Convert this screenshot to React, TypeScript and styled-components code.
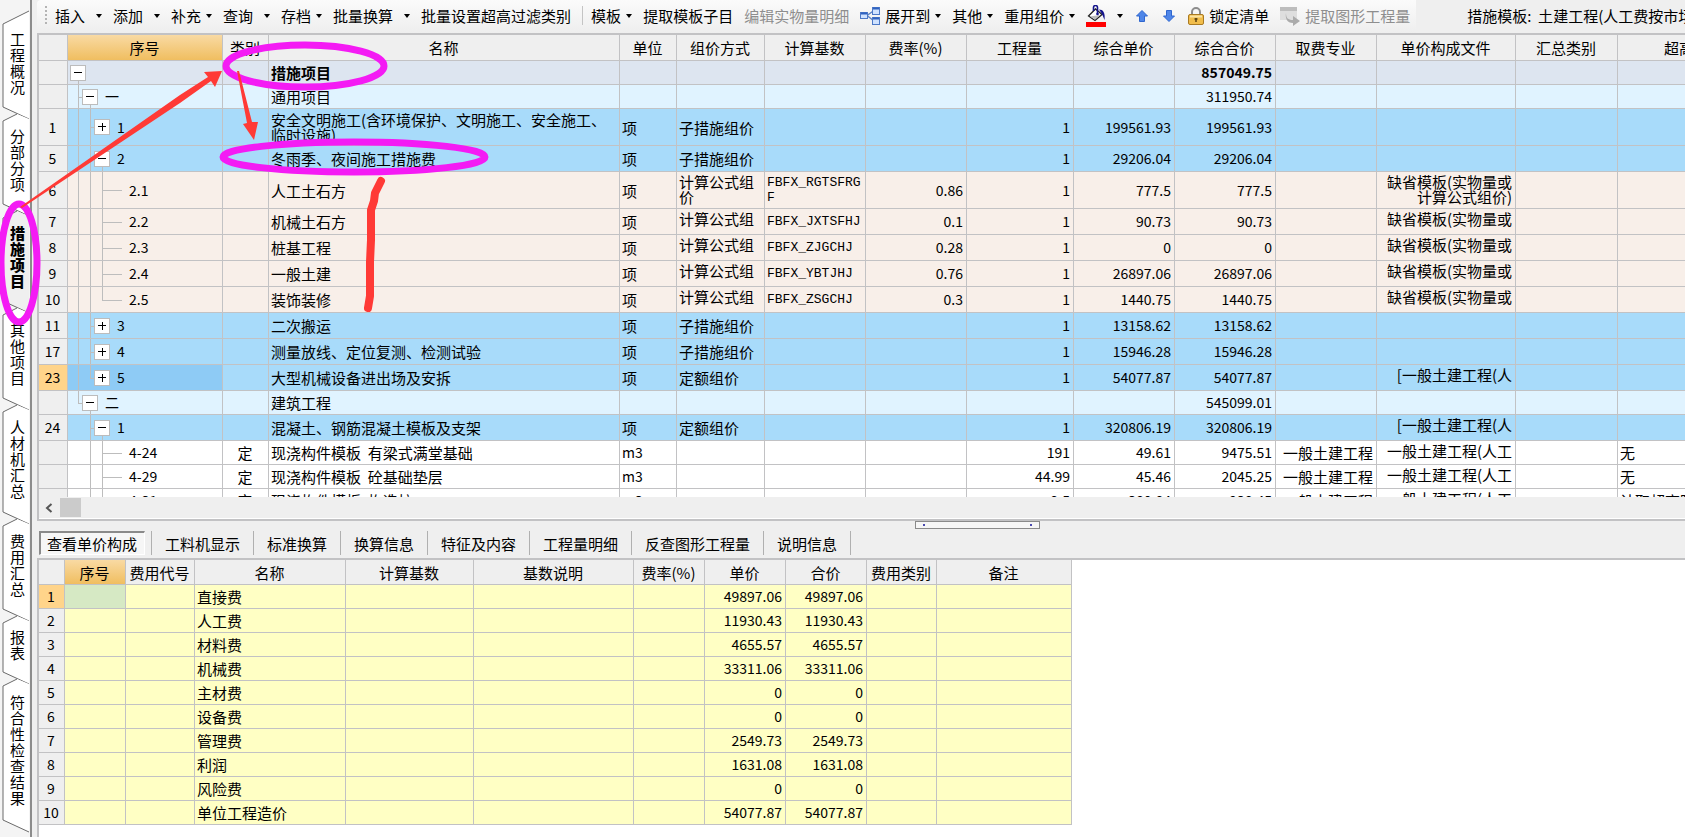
import React from 'react';
import styled, { createGlobalStyle, css } from 'styled-components';

const GlobalStyle = createGlobalStyle`
  *, *::before, *::after { box-sizing: border-box; }
  html, body { margin: 0; background: #efefef; }
  body, button {
    font-family: "Noto Sans CJK SC", "Liberation Sans", sans-serif;
    font-size: 15px;
    line-height: 15px;
    color: #000;
  }
  button { border: 0; padding: 0; background: none; white-space: nowrap; }
`;

const line = '#c2c2c4';

const Page = styled.div`
  position: relative;
  display: flex;
  height: 100vh;
  overflow: hidden;
`;

/* ---------- side tabs ---------- */

const SideBar = styled.nav`
  flex: none;
  display: flex;
  flex-direction: column;
  width: 32px;
  padding-top: 17px;
  background: #f4f4f4;
  border-right: 2px solid #8c8c8c;
  overflow: hidden;
`;

const SideTab = styled.button<{ $active?: boolean }>`
  position: relative;
  flex: none;
  width: 100%;
  padding: 0 6px 6px 10px;
  white-space: normal;
  word-break: break-all;
  line-height: 16px;
  font-weight: ${p => (p.$active ? 900 : 400)};
`;

const TabShape = styled.svg`
  position: absolute;
  left: 0;
  top: 0;
  width: 30px;
  overflow: visible;
`;

const TabText = styled.span`
  position: relative;
  display: block;
  width: 15px;
  overflow-wrap: anywhere;
`;

const sideTabs = ['工程概况', '分部分项', '措施项目', '其他项目', '人材机汇总', '费用汇总', '报表', '符合性检查结果'];

function SideTabs() {
  return (
    <SideBar>
      {sideTabs.map((name, i) => {
        const h = name.length * 17 + 29;
        const active = name === '措施项目';
        const top = i === 0 ? 'M29 -6 L3 7' : 'M17 0 L3 7';
        return (
          <SideTab key={name} $active={active} style={{ height: h }}>
            <TabShape height={h}>
              <path d={`${top} V${h - 7} L29 ${h + 5} V${i === 0 ? -6 : 5} Z`} fill={active ? '#efefef' : '#fff'} />
              <path d={`${top} V${h - 7} L29 ${h + 5}`} fill="none" stroke="#6a6a6a" />
            </TabShape>
            <TabText>{name}</TabText>
          </SideTab>
        );
      })}
    </SideBar>
  );
}

/* ---------- toolbar ---------- */

const Main = styled.main`
  flex: 1;
  min-width: 0;
  display: flex;
  flex-direction: column;
  padding-left: 5px;
`;

const TopBar = styled.header`
  flex: none;
  display: flex;
  align-items: center;
  height: 33px;
  overflow: hidden;
`;

const Tools = styled.div`
  flex: none;
  display: flex;
  align-items: center;
  gap: 11px;
  height: 100%;
  padding: 0 6px 2px 8px;
  background: linear-gradient(#fbfbfb, #eeeeee);
  border-radius: 4px 0 0 0;
`;

const Grip = styled.span`
  width: 2px;
  height: 19px;
  margin-right: -3px;
  background: repeating-linear-gradient(#b4b4b4 0 2px, transparent 2px 4px);
`;

const Tool = styled.button<{ $wide?: boolean; $gray?: boolean }>`
  flex: none;
  display: flex;
  align-items: center;
  gap: ${p => (p.$wide ? 11 : 5)}px;
  height: 24px;
  color: ${p => (p.$gray ? '#8e8e8e' : '#000')};
`;

const IconTool = styled(Tool)`
  padding: 0 2px;
`;

const Caret = styled.i`
  border: 3px solid transparent;
  border-top: 4px solid #000;
  border-bottom: 0;
`;

const Separator = styled.span`
  width: 1px;
  height: 19px;
  margin-right: -3px;
  background: #c4c4c4;
`;

const TemplateInfo = styled.span`
  flex: none;
  padding: 0 0 2px 51px;
  white-space: pre;
`;

const TreeIcon = () => (
  <svg width="20" height="20" viewBox="0 0 20 20">
    <path d="M7 9.500 L14 4.500 M7 9.500 L14 15" fill="none" stroke="#5b82c4" strokeWidth="1.500" />
    <rect x="0.500" y="6.500" width="7" height="6" fill="#cfe2ff" stroke="#4d79c7" />
    <rect x="12.500" y="1.500" width="7" height="7" fill="#cfe2ff" stroke="#4d79c7" />
    <rect x="12.500" y="11.500" width="7" height="7" fill="#cfe2ff" stroke="#4d79c7" />
    <path d="M1 7.500h6M13 2.500h6M13 12.500h6" stroke="#2f62c0" strokeWidth="2" />
  </svg>
);

const BucketIcon = () => (
  <svg width="20" height="22" viewBox="0 0 20 22">
    <path d="M2.500 11 L9.500 4 L16 9.500 L9 15.500 Z" fill="#fff" stroke="#222" strokeWidth="1.300" />
    <path d="M4 11.500 L14 10 L9 14.500 Z" fill="#bbb" />
    <path d="M7.500 6V2.500a2 2 0 0 1 4 0V9" fill="none" stroke="#14148c" strokeWidth="1.600" />
    <circle cx="11.500" cy="9" r="1.300" fill="#14148c" />
    <path d="M13 4.500c4 0 6.500 3 5.500 10.500-1-2-1.500-5-5.500-10.500z" fill="#14148c" />
    <rect x="0" y="17" width="20" height="5" fill="#f00" />
  </svg>
);

const ArrowIcon = ({ down }: { down?: boolean }) => (
  <svg width="12" height="12" viewBox="0 0 12 12">
    <path
      d={down ? 'M3.500 .5h5v5.500h3L6 11.500.5 6h3z' : 'M3.500 11.500h5V6h3L6 .5.5 6h3z'}
      fill="#4f86e8"
      stroke="#2f66cf"
    />
  </svg>
);

const LockIcon = () => (
  <svg width="16" height="18" viewBox="0 0 16 18">
    <path d="M4 8V5a4 4 0 0 1 8 0v3" fill="none" stroke="#8d8d8d" strokeWidth="2" />
    <rect x="0.500" y="7.500" width="15" height="10" rx="1.500" fill="#f1bd4b" stroke="#a97a22" />
    <path d="M2 9.500h12" stroke="#fbe3a2" strokeWidth="2" />
    <path d="M8 11v4M6.500 12h3" stroke="#5c4210" strokeWidth="1.500" />
  </svg>
);

const ExtractIcon = () => (
  <svg width="20" height="20" viewBox="0 0 20 20">
    <rect x="0" y="1" width="17" height="13" fill="#dedede" />
    <rect x="0" y="1" width="17" height="4" fill="#bdbdbd" />
    <path d="M6 7c0 5 2 7 7 7v-4l7 5-7 5v-3C7 17 5 12 6 7z" fill="#ababab" />
  </svg>
);

function Toolbar() {
  return (
    <TopBar>
      <Tools role="toolbar">
        <Grip />
        <Tool $wide>插入<Caret /></Tool>
        <Tool $wide>添加<Caret /></Tool>
        <Tool>补充<Caret /></Tool>
        <Tool $wide>查询<Caret /></Tool>
        <Tool>存档<Caret /></Tool>
        <Tool $wide>批量换算<Caret /></Tool>
        <Tool>批量设置超高过滤类别</Tool>
        <Separator />
        <Tool>模板<Caret /></Tool>
        <Tool>提取模板子目</Tool>
        <Tool $gray disabled>编辑实物量明细</Tool>
        <Tool><TreeIcon />展开到<Caret /></Tool>
        <Tool>其他<Caret /></Tool>
        <Tool>重用组价<Caret /></Tool>
        <Tool $wide aria-label="填充颜色"><BucketIcon /><Caret /></Tool>
        <IconTool aria-label="上移"><ArrowIcon /></IconTool>
        <IconTool aria-label="下移"><ArrowIcon down /></IconTool>
        <Tool><LockIcon />锁定清单</Tool>
        <Tool $gray disabled><ExtractIcon />提取图形工程量</Tool>
      </Tools>
      <TemplateInfo>措施模板:  土建工程(人工费按市场价)</TemplateInfo>
    </TopBar>
  );
}

/* ---------- grids ---------- */

const Frame = styled.section<{ $fill?: boolean; $white?: boolean }>`
  flex: ${p => (p.$fill ? '1 0 0' : 'none')};
  min-height: 0;
  overflow: hidden;
  border-top: 2px solid ${line};
  border-left: 2px solid ${line};
  background: ${p => (p.$white ? '#fff' : '#efefef')};
`;

const GridClip = styled.div`
  height: 462px;
  overflow: hidden;
  background: #fff;
`;

const Grid = styled.table`
  table-layout: fixed;
  width: 0;
  border-collapse: separate;
  border-spacing: 0;
`;

const cellBase = css`
  padding: 0 3px 0 2px;
  border-right: 1px solid ${line};
  border-bottom: 1px solid ${line};
  overflow: hidden;
  white-space: nowrap;
  font-weight: 400;
`;

const HeadCell = styled.th<{ $hot?: boolean; $h: number }>`
  ${cellBase}
  height: ${p => p.$h}px;
  background: ${p => (p.$hot ? 'linear-gradient(#f9daa3, #f0be60)' : '#efefef')};
`;

const IndexCell = styled.th<{ $hot?: boolean }>`
  ${cellBase}
  font-size: 14px;
  background: ${p => (p.$hot ? '#ffd48a' : '#efefef')};
`;

type Kind = 'root' | 'part' | 'item' | 'sub' | 'quota' | 'fee';
const rowColor: Record<Kind, string> = {
  root: '#dde5f0',
  part: '#e0f3ff',
  item: '#a8dbfa',
  sub: '#f8efe9',
  quota: '#ffffff',
  fee: '#ffffc4',
};

const Row = styled.tr<{ $kind: Kind; $h: number }>`
  height: ${p => p.$h}px;
  background: ${p => rowColor[p.$kind]};
`;

const Cell = styled.td<{
  $align?: 'left' | 'center' | 'right';
  $num?: boolean;
  $bold?: boolean;
  $top?: boolean;
  $bg?: string;
}>`
  ${cellBase}
  text-align: ${p => p.$align || 'left'};
  font-size: ${p => (p.$num ? 14 : 15)}px;
  font-weight: ${p => (p.$bold ? 700 : 400)};
  ${p => p.$top && 'vertical-align: top; padding-top: 2px;'}
  ${p => p.$bg && `background: ${p.$bg};`}
`;

const CodeCell = styled(Cell)`
  font-family: "Liberation Mono", monospace;
  font-size: 13px;
`;

const Tree = styled.div<{ $h: number }>`
  display: flex;
  align-items: center;
  height: ${p => p.$h}px;
  padding-left: 2px;
  font-size: 14px;
`;

type Guide = 'none' | 'line' | 'tee' | 'end';
const Unit = styled.span<{ $g?: Guide; $long?: boolean }>`
  position: relative;
  flex: none;
  align-self: stretch;
  width: 12px;
  ${p =>
    p.$g && p.$g !== 'none' &&
    css`
      &::before {
        content: '';
        position: absolute;
        left: 6px;
        top: 0;
        height: ${p.$g === 'end' ? '50%' : '100%'};
        border-left: 1px solid #bdbdbd;
      }
    `}
  ${p =>
    (p.$g === 'tee' || p.$g === 'end') &&
    css`
      &::after {
        content: '';
        position: absolute;
        left: 6px;
        top: 50%;
        width: ${p.$long ? 20 : 8}px;
        border-top: 1px solid #bdbdbd;
      }
    `}
`;

const ToggleUnit = styled.span<{ $open: boolean }>`
  position: relative;
  flex: none;
  display: flex;
  align-items: center;
  justify-content: center;
  align-self: stretch;
  width: 12px;
  &::before {
    content: '';
    position: absolute;
    left: 6px;
    top: 50%;
    bottom: 0;
    border-left: ${p => (p.$open ? 1 : 0)}px solid #bdbdbd;
  }
`;

const Toggle = styled.button<{ $open: boolean }>`
  position: relative;
  flex: none;
  width: 16px;
  height: 16px;
  background: #fff;
  border: 1px solid #bcbcbc;
  &::before, &::after {
    content: '';
    position: absolute;
    background: #000;
  }
  &::before { left: 3px; top: 6px; width: 8px; height: 1px; }
  &::after { left: 7px; top: 3px; width: ${p => (p.$open ? 0 : 1)}px; height: 8px; }
`;

const TreeLabel = styled.span<{ $leaf: boolean }>`
  margin-left: ${p => (p.$leaf ? 21 : 9)}px;
`;

interface Column { name: string; w: number; }

const topColumns: Column[] = [
  { name: '', w: 29 }, { name: '序号', w: 155 }, { name: '类别', w: 46 }, { name: '名称', w: 351 },
  { name: '单位', w: 57 }, { name: '组价方式', w: 88 }, { name: '计算基数', w: 101 }, { name: '费率(%)', w: 101 },
  { name: '工程量', w: 107 }, { name: '综合单价', w: 101 }, { name: '综合合价', w: 101 }, { name: '取费专业', w: 101 },
  { name: '单价构成文件', w: 139 }, { name: '汇总类别', w: 102 }, { name: '超高过滤类别', w: 184 },
];

interface Item {
  kind: Kind;
  no?: string;
  guides: Guide[];
  open?: boolean;
  label?: string;
  type?: string;
  name: string;
  unit?: string;
  method?: string;
  base?: string;
  rate?: string;
  qty?: string;
  price?: string;
  total?: string;
  trade?: string;
  file?: string;
  high?: string;
  tall?: boolean;
  hot?: boolean;
}

const items: Item[] = [
  { kind: 'root', guides: [], open: true, name: '措施项目', total: '857049.75' },
  { kind: 'part', guides: ['tee'], open: true, label: '一', name: '通用项目', total: '311950.74' },
  { kind: 'item', no: '1', guides: ['line', 'tee'], open: false, label: '1', tall: true, name: '安全文明施工(含环境保护、文明施工、安全施工、\n临时设施)', unit: '项', method: '子措施组价', qty: '1', price: '199561.93', total: '199561.93' },
  { kind: 'item', no: '5', guides: ['line', 'tee'], open: true, label: '2', name: '冬雨季、夜间施工措施费', unit: '项', method: '子措施组价', qty: '1', price: '29206.04', total: '29206.04' },
  { kind: 'sub', no: '6', guides: ['line', 'line', 'tee'], label: '2.1', tall: true, name: '人工土石方', unit: '项', method: '计算公式组\n价', base: 'FBFX_RGTSFRG\nF', rate: '0.86', qty: '1', price: '777.5', total: '777.5', file: '缺省模板(实物量或\n计算公式组价)' },
  { kind: 'sub', no: '7', guides: ['line', 'line', 'tee'], label: '2.2', name: '机械土石方', unit: '项', method: '计算公式组', base: 'FBFX_JXTSFHJ', rate: '0.1', qty: '1', price: '90.73', total: '90.73', file: '缺省模板(实物量或' },
  { kind: 'sub', no: '8', guides: ['line', 'line', 'tee'], label: '2.3', name: '桩基工程', unit: '项', method: '计算公式组', base: 'FBFX_ZJGCHJ', rate: '0.28', qty: '1', price: '0', total: '0', file: '缺省模板(实物量或' },
  { kind: 'sub', no: '9', guides: ['line', 'line', 'tee'], label: '2.4', name: '一般土建', unit: '项', method: '计算公式组', base: 'FBFX_YBTJHJ', rate: '0.76', qty: '1', price: '26897.06', total: '26897.06', file: '缺省模板(实物量或' },
  { kind: 'sub', no: '10', guides: ['line', 'line', 'end'], label: '2.5', name: '装饰装修', unit: '项', method: '计算公式组', base: 'FBFX_ZSGCHJ', rate: '0.3', qty: '1', price: '1440.75', total: '1440.75', file: '缺省模板(实物量或' },
  { kind: 'item', no: '11', guides: ['line', 'tee'], open: false, label: '3', name: '二次搬运', unit: '项', method: '子措施组价', qty: '1', price: '13158.62', total: '13158.62' },
  { kind: 'item', no: '17', guides: ['line', 'tee'], open: false, label: '4', name: '测量放线、定位复测、检测试验', unit: '项', method: '子措施组价', qty: '1', price: '15946.28', total: '15946.28' },
  { kind: 'item', no: '23', hot: true, guides: ['line', 'end'], open: false, label: '5', name: '大型机械设备进出场及安拆', unit: '项', method: '定额组价', qty: '1', price: '54077.87', total: '54077.87', file: '[一般土建工程(人' },
  { kind: 'part', guides: ['end'], open: true, label: '二', name: '建筑工程', total: '545099.01' },
  { kind: 'item', no: '24', guides: ['none', 'tee'], open: true, label: '1', name: '混凝土、钢筋混凝土模板及支架', unit: '项', method: '定额组价', qty: '1', price: '320806.19', total: '320806.19', file: '[一般土建工程(人' },
  { kind: 'quota', guides: ['none', 'line', 'tee'], label: '4-24', type: '定', name: '现浇构件模板  有梁式满堂基础', unit: 'm3', qty: '191', price: '49.61', total: '9475.51', trade: '一般土建工程', file: '一般土建工程(人工', high: '无' },
  { kind: 'quota', guides: ['none', 'line', 'tee'], label: '4-29', type: '定', name: '现浇构件模板  砼基础垫层', unit: 'm3', qty: '44.99', price: '45.46', total: '2045.25', trade: '一般土建工程', file: '一般土建工程(人工', high: '无' },
  { kind: 'quota', guides: ['none', 'line', 'tee'], label: '4-31', type: '定', name: '现浇构件模板  构造柱', unit: 'm3', qty: '2.5', price: '380.84', total: '938.45', trade: '一般土建工程', file: '一般土建工程(人工', high: '计取超高降效' },
];

const Lines = styled.span`
  white-space: pre;
`;

function rowHeight(it: Item) {
  if (it.tall) return 37;
  return it.kind === 'item' || it.kind === 'sub' ? 26 : 24;
}

function MeasureGrid() {
  return (
    <Grid>
      <colgroup>
        {topColumns.map((c, i) => <col key={i} style={{ width: c.w }} />)}
      </colgroup>
      <thead>
        <tr>
          {topColumns.map((c, i) => <HeadCell key={i} $h={26} $hot={i === 1}>{c.name}</HeadCell>)}
        </tr>
      </thead>
      <tbody>
        {items.map((it, i) => {
          const h = rowHeight(it);
          const leaf = it.open === undefined;
          const bold = it.kind === 'root';
          return (
            <Row key={i} $kind={it.kind} $h={h}>
              <IndexCell $hot={it.hot}>{it.no}</IndexCell>
              <Cell $bg={it.hot ? '#8ecbf5' : undefined}>
                <Tree $h={h - 1}>
                  {it.guides.map((g, k) => <Unit key={k} $g={g} $long={leaf} />)}
                  {!leaf && (
                    <ToggleUnit $open={!!it.open}>
                      <Toggle $open={!!it.open} aria-label={it.open ? '收起' : '展开'} />
                    </ToggleUnit>
                  )}
                  <TreeLabel $leaf={leaf}>{it.label}</TreeLabel>
                </Tree>
              </Cell>
              <Cell $align="center">{it.type}</Cell>
              <Cell $bold={bold}><Lines>{it.name}</Lines></Cell>
              <Cell $num={it.unit === 'm3'}>{it.unit}</Cell>
              <Cell $top={it.kind === 'sub'}><Lines>{it.method}</Lines></Cell>
              <CodeCell><Lines>{it.base}</Lines></CodeCell>
              <Cell $align="right" $num>{it.rate}</Cell>
              <Cell $align="right" $num>{it.qty}</Cell>
              <Cell $align="right" $num>{it.price}</Cell>
              <Cell $align="right" $num $bold={bold}>{it.total}</Cell>
              <Cell $align="right">{it.trade}</Cell>
              <Cell $align="right" $top={!!it.file}><Lines>{it.file}</Lines></Cell>
              <Cell />
              <Cell>{it.high}</Cell>
            </Row>
          );
        })}
      </tbody>
    </Grid>
  );
}

const ScrollBar = styled.div`
  display: flex;
  align-items: center;
  height: 22px;
  padding-left: 6px;
  gap: 7px;
  background: #efefef;
  border-bottom: 1px solid #fff;
`;

const ScrollButton = styled.button`
  display: flex;
  width: 8px;
`;

const Thumb = styled.div`
  width: 21px;
  height: 19px;
  background: #cbcbcb;
`;

const Splitter = styled.div`
  flex: none;
  display: flex;
  justify-content: center;
  height: 12px;
  padding-left: 232px;
  border-top: 2px solid ${line};
`;

const SplitHandle = styled.button`
  display: flex;
  align-items: center;
  justify-content: space-between;
  width: 125px;
  height: 8px;
  padding: 0 7px;
  background: #f6f6f6;
  border: 1px solid #8a8a8a;
  &::before, &::after {
    content: '';
    width: 2px;
    height: 2px;
    background: #4a4ab0;
  }
`;

const DetailTabs = styled.div`
  flex: none;
  display: flex;
  height: 24px;
  margin-bottom: 3px;
  padding: 0 2px;
`;

const DetailTab = styled.button<{ $active?: boolean }>`
  flex: none;
  padding: 0 13px;
  border-right: 1px solid #b0b0b0;
  ${p =>
    p.$active &&
    css`
      margin-right: 6px;
      padding: 0 7px 0 6px;
      background: #f6f6f6;
      border: 1px solid #fff;
      border-top: 2px solid #8a8a8a;
      border-left: 2px solid #8a8a8a;
    `}
`;

const TabDivider = styled.span`
  width: 1px;
  background: #b0b0b0;
`;

const detailTabs = ['工料机显示', '标准换算', '换算信息', '特征及内容', '工程量明细', '反查图形工程量', '说明信息'];

const feeColumns: Column[] = [
  { name: '', w: 26 }, { name: '序号', w: 61 }, { name: '费用代号', w: 69 }, { name: '名称', w: 151 },
  { name: '计算基数', w: 128 }, { name: '基数说明', w: 160 }, { name: '费率(%)', w: 71 }, { name: '单价', w: 81 },
  { name: '合价', w: 81 }, { name: '费用类别', w: 70 }, { name: '备注', w: 135 },
];

const fees: [string, string][] = [
  ['直接费', '49897.06'], ['人工费', '11930.43'], ['材料费', '4655.57'], ['机械费', '33311.06'], ['主材费', '0'],
  ['设备费', '0'], ['管理费', '2549.73'], ['利润', '1631.08'], ['风险费', '0'], ['单位工程造价', '54077.87'],
];

function FeeGrid() {
  return (
    <Grid>
      <colgroup>
        {feeColumns.map((c, i) => <col key={i} style={{ width: c.w }} />)}
      </colgroup>
      <thead>
        <tr>
          {feeColumns.map((c, i) => <HeadCell key={i} $h={25} $hot={i === 1}>{c.name}</HeadCell>)}
        </tr>
      </thead>
      <tbody>
        {fees.map(([name, value], i) => (
          <Row key={name} $kind="fee" $h={24}>
            <IndexCell $hot={i === 0}>{i + 1}</IndexCell>
            <Cell $bg={i === 0 ? '#d6e9c4' : undefined} />
            <Cell />
            <Cell>{name}</Cell>
            <Cell />
            <Cell />
            <Cell />
            <Cell $align="right" $num>{value}</Cell>
            <Cell $align="right" $num>{value}</Cell>
            <Cell />
            <Cell />
          </Row>
        ))}
      </tbody>
    </Grid>
  );
}

/* ---------- hand-drawn marks over the grid ---------- */

const Overlay = styled.svg`
  position: absolute;
  left: 0;
  top: 0;
  width: 100%;
  height: 100%;
  pointer-events: none;
`;

function Marks() {
  return (
    <Overlay>
      <g fill="none" stroke="#f41bf4" strokeWidth="7">
        <ellipse cx="305" cy="66" rx="79" ry="21" />
        <ellipse cx="354" cy="157" rx="131" ry="15" />
        <ellipse cx="19" cy="263" rx="18" ry="59" />
      </g>
      <path d="M20 207 L180 95 L208 77 L204 72 L222 71 L215 87 L211 81 L180 103 L22 208 Z" fill="#ff3a36" />
      <path d="M237 71 L247 123 L243 124 L254 140 L258 122 L252 122 L239 71 Z" fill="#ff3a36" />
      <path
        d="M381 181 L375 193 L374 201 L371 210 L371 240 L370 262 L370 296 L368 308"
        fill="none"
        stroke="#ff3a36"
        strokeWidth="8"
        strokeLinecap="round"
        strokeLinejoin="round"
      />
    </Overlay>
  );
}

export default function App() {
  return (
    <Page>
      <GlobalStyle />
      <SideTabs />
      <Main>
        <Toolbar />
        <Frame>
          <GridClip>
            <MeasureGrid />
          </GridClip>
          <ScrollBar>
            <ScrollButton aria-label="向左滚动">
              <svg width="8" height="10" viewBox="0 0 8 10">
                <path d="M6.500 1 L2 5 L6.500 9" fill="none" stroke="#555" strokeWidth="2" />
              </svg>
            </ScrollButton>
            <Thumb />
          </ScrollBar>
        </Frame>
        <Splitter>
          <SplitHandle aria-label="调整面板高度" />
        </Splitter>
        <DetailTabs>
          <DetailTab $active>查看单价构成</DetailTab>
          <TabDivider />
          {detailTabs.map(t => <DetailTab key={t}>{t}</DetailTab>)}
        </DetailTabs>
        <Frame $fill $white>
          <FeeGrid />
        </Frame>
      </Main>
      <Marks />
    </Page>
  );
}
